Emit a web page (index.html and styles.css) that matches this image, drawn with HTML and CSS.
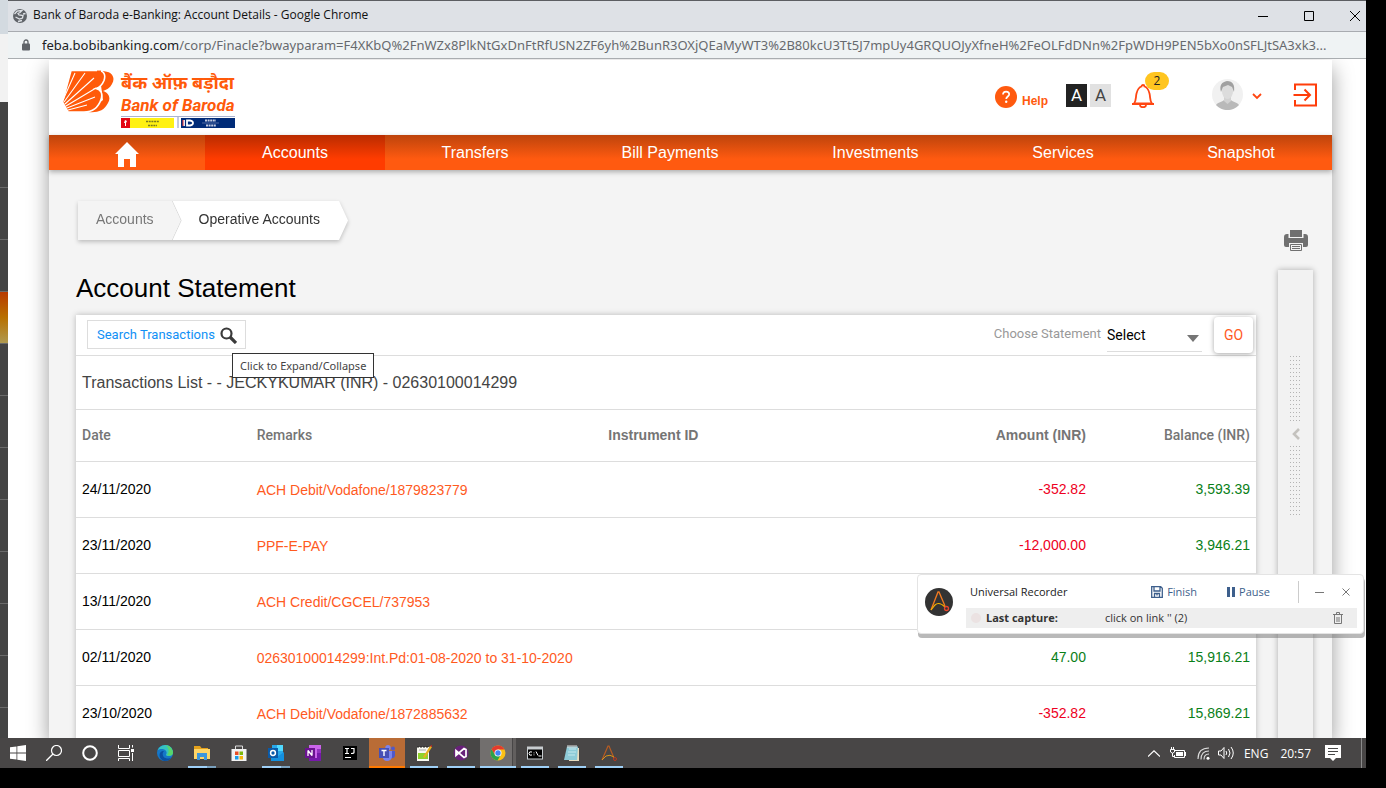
FILE: index.html
```html
<!DOCTYPE html>
<html lang="en">
<head>
<meta charset="utf-8">
<title>Bank of Baroda e-Banking: Account Details</title>
<link rel="stylesheet" href="styles.css">
</head>
<body>
<div class="desktop">
  <div class="workspace">
    <div class="behind" aria-hidden="true">
      <span class="b-light"></span><span class="b-white"></span><span class="b-first"></span><span class="b-item"></span><span class="b-item"></span><span class="b-item b-hot"></span><span class="b-item"></span><span class="b-item"></span><span class="b-item"></span><span class="b-item"></span><span class="b-item"></span><span class="b-item"></span><span class="b-item"></span><span class="b-item"></span>
    </div>
    <div class="window">
      <div class="titlebar">
        <svg class="globe" viewBox="0 0 14 14"><circle cx="7" cy="7" r="7" fill="#5f6368"/><path d="M1.500 5L4 2.200 9 1.500 7 3.500 5 4.500 6 6l4 .5-.5 2.500-3 1-4-2M10 5l2.500-.5M5 12.500l4-1" stroke="#dee1e6" stroke-width="1.300" fill="none"/></svg>
        <span class="wtitle">Bank of Baroda e-Banking: Account Details - Google Chrome</span>
        <div class="wbtns">
          <button aria-label="Minimize"><svg viewBox="0 0 12 12"><path d="M1 6.500h10" stroke="#000" fill="none"/></svg></button>
          <button aria-label="Maximize"><svg viewBox="0 0 12 12"><path d="M1.500 1.500h9v9h-9z" stroke="#000" fill="none"/></svg></button>
          <button aria-label="Close"><svg viewBox="0 0 12 12"><path d="M1 1l10 10M11 1L1 11" stroke="#000" fill="none"/></svg></button>
        </div>
      </div>
      <div class="urlbar">
        <svg class="lock" viewBox="0 0 8 12"><path d="M2 5V3a2 2 0 0 1 4 0v2" fill="none" stroke="#5f6368" stroke-width="1.300"/><rect y="4.500" width="8" height="7" rx="1" fill="#5f6368"/></svg>
        <div class="url"><b>feba.bobibanking.com</b>/corp/Finacle?bwayparam=F4XKbQ%2FnWZx8PlkNtGxDnFtRfUSN2ZF6yh%2BunR3OXjQEaMyWT3%2B80kcU3Tt5J7mpUy4GRQUOJyXfneH%2FeOLFdDNn%2FpWDH9PEN5bXo0nSFLJtSA3xk3...</div>
      </div>
      <div class="viewport">
        <div class="page">
          <header class="header">
            <div class="logo">
              <svg class="mark" viewBox="0 0 51 43"><path d="M36 1c13-1 17 6 13 13-2 4-6 6-9 7 6 2 8 7 5 12-4 8-11 10-20 9l15-12z" fill="#ff5a0a"/><path d="M8 .500h26c7 0 9 4 7 10-2 5-5 7-8 8 5 1 7 5 5 11-3 9-9 12.500-17 12.500H5L-.5 32z" fill="#ff5a0a" stroke="#fff" stroke-width="1.600"/><path d="M34 1.300h4" stroke="#ff5a0a" stroke-width="1.500"/><path d="M0 30L12 3M1 32L22 3M2 34L31 8M3 36l30-18M4 38l28-11M5 40l19-5" stroke="#fff" stroke-width="1.100" fill="none"/></svg>
              <div class="words">
                <div class="hindi" lang="hi">बैंक ऑफ़ बड़ौदा</div>
                <div class="latin">Bank of Baroda</div>
                <svg class="partners" viewBox="0 0 114 12"><path d="M0 0.500h114" stroke="#aab4d0"/><path d="M0 2h9v10H0z" fill="#e30613"/><path d="M9 2h44v10H9z" fill="#fff112"/><path d="M4 4l2 1-1 2v3H4V7H3z" fill="#fff"/><path d="M25 5.500h13M27 9.500h9" stroke="#777a20" stroke-width="1.500" stroke-dasharray="2 .7"/><path d="M57 1v11" stroke="#8a96bd"/><path d="M60 2h54v10H60z" fill="#002b78"/><path d="M63 4v6M66 4.500h3q3 .5 3 2.500t-3 2.500h-3z" stroke="#fff" stroke-width="1.800" fill="none"/><path d="M62 4v6" stroke="#e33"/><path d="M84 4.500h11M85 9.500h10" stroke="#c5cce0" stroke-width="1.800" stroke-dasharray="2 .6"/><path d="M81 7h17" stroke="#8795bf" stroke-width=".6"/></svg>
              </div>
            </div>
            <div class="tools">
              <a class="help" href="#"><svg viewBox="0 0 22 22"><circle cx="11" cy="11" r="11" fill="#ff5a0f"/><path d="M8 8.500C8 4.500 14.200 4.700 14.200 8.300 14.200 10.500 11.200 10.600 11.200 13" stroke="#fff" stroke-width="1.700" fill="none"/><circle cx="11.200" cy="15.800" r="1.200" fill="#fff"/></svg><span>Help</span></a>
              <div class="contrast"><button class="dark">A</button><button>A</button></div>
              <button class="bell" aria-label="Notifications"><svg viewBox="0 0 24 24"><path d="M3 19.500c2.500-3 1.500-6 2.500-10C6.500 5.500 8.500 3 10.500 2.500 10.500.5 13.500.5 13.500 2.500c2 .5 4 3 5 7 1 4 0 7 2.500 10z" fill="none" stroke="#ff4612" stroke-width="1.800"/><path d="M1 20h22" stroke="#ff4612" stroke-width="2"/><path d="M9 21c0 3 6 3 6 0" fill="none" stroke="#ff4612" stroke-width="1.800"/></svg><span class="badge">2</span></button>
              <button class="user" aria-label="Profile"><svg class="avatar" viewBox="0 0 31 31"><circle cx="15.500" cy="15.500" r="15.500" fill="#f1f1f1"/><path d="M4 26c2-3 6-3 8-5h7c2 2 6 2 8 5a15.500 15.500 0 0 1-23 0z" fill="#b9b9b9"/><path d="M12 17h7v5l-3.500 3L12 22z" fill="#d2d2d2"/><ellipse cx="15.500" cy="12.500" rx="5.500" ry="7.500" fill="#dcdcdc"/><path d="M9 13C7 6 10 3 15 2c6 0 8 4 7 11l-2-5-4-2-5 2z" fill="#a0a0a0"/></svg><svg class="chev" viewBox="0 0 10 7"><path d="M1 1l4 4 4-4" stroke="#ff4612" stroke-width="1.800" fill="none"/></svg></button>
              <button class="exit" aria-label="Log out"><svg viewBox="0 0 24 24"><path d="M1.500 7V1.500h21v21h-21V17M0 12h16M11 6.500l5.500 5.500-5.500 5.500" fill="none" stroke="#ff3d0a" stroke-width="2"/></svg></button>
            </div>
          </header>
          <nav class="nav">
            <a href="#" aria-label="Home"><svg viewBox="0 0 24 25"><path d="M12 0l12 12h-3v13h-6v-8H9v8H3V12H0z" fill="#fff"/></svg></a>
            <a href="#" class="active">Accounts</a><a href="#">Transfers</a><a href="#">Bill Payments</a><a href="#">Investments</a><a href="#">Services</a><a href="#">Snapshot</a>
          </nav>
          <div class="content">
            <main class="main">
              <div class="crumbs"><a class="c1" href="#">Accounts</a><a class="c2" href="#">Operative Accounts</a></div>
              <h1>Account Statement</h1>
              <section class="card">
                <div class="bar">
                  <div class="searchwrap">
                    <button class="search">Search Transactions<svg viewBox="0 0 17 17"><circle cx="6.500" cy="6.500" r="5" fill="none" stroke="#3a3a3a" stroke-width="2.200"/><path d="M10 10l6 6" stroke="#3a3a3a" stroke-width="3.200"/></svg></button>
                    <div class="tip" role="tooltip">Click to Expand/Collapse</div>
                  </div>
                  <div class="choose">
                    <label for="stmt">Choose Statement</label>
                    <div class="selwrap"><select id="stmt"><option>Select</option></select><svg viewBox="0 0 12 7"><path d="M0 0h12L6 7z" fill="#757575"/></svg></div>
                    <button class="go">GO</button>
                  </div>
                </div>
                <h2>Transactions List - - JECKYKUMAR (INR) - 02630100014299</h2>
                <table>
                  <colgroup><col class="w-date"><col class="w-rem"><col class="w-ins"><col class="w-amt"><col class="w-bal"></colgroup>
                  <thead><tr><th>Date</th><th>Remarks</th><th class="strong">Instrument ID</th><th class="num strong">Amount (INR)</th><th class="num">Balance (INR)</th></tr></thead>
                  <tbody>
                    <tr><td>24/11/2020</td><td class="remark"><a href="#">ACH Debit/Vodafone/1879823779</a></td><td></td><td class="num neg">-352.82</td><td class="num pos">3,593.39</td></tr>
                    <tr><td>23/11/2020</td><td class="remark"><a href="#">PPF-E-PAY</a></td><td></td><td class="num neg">-12,000.00</td><td class="num pos">3,946.21</td></tr>
                    <tr><td>13/11/2020</td><td class="remark"><a href="#">ACH Credit/CGCEL/737953</a></td><td></td><td></td><td></td></tr>
                    <tr><td>02/11/2020</td><td class="remark"><a href="#">02630100014299:Int.Pd:01-08-2020 to 31-10-2020</a></td><td></td><td class="num pos">47.00</td><td class="num pos">15,916.21</td></tr>
                    <tr><td>23/10/2020</td><td class="remark"><a href="#">ACH Debit/Vodafone/1872885632</a></td><td></td><td class="num neg">-352.82</td><td class="num pos">15,869.21</td></tr>
                  </tbody>
                </table>
              </section>
            </main>
            <aside class="side">
              <button class="print" aria-label="Print"><svg viewBox="0 0 24 22"><path d="M6 0h12v7H6z" fill="#707070"/><path d="M0 7q0-3 3-3h1.500v4h15V4H21q3 0 3 3v8q0 2-2 2h-3v-4H5v4H2q-2 0-2-2z" fill="#707070"/><path d="M6.500 14.500h11v6h-11zM8 16.500h8M8 18.500h8" fill="none" stroke="#707070"/></svg></button>
              <button class="drawer" aria-label="Open panel"><span class="dots"></span><svg viewBox="0 0 8 12"><path d="M7 1L2 6l5 5" fill="none" stroke="#c4c2be" stroke-width="2.600"/></svg><span class="dots tall"></span></button>
            </aside>
          </div>
        </div>
      </div>
    </div>
    <section class="recorder">
      <svg class="rlogo" viewBox="0 0 28 28"><circle cx="14" cy="14" r="14" fill="#333"/><path d="M6 22L13 4h1l6 14" stroke="#f47b20" stroke-width="1.300" fill="none"/><path d="M6 22l4-5c3-3 7-1 10 2" stroke="#f5b400" stroke-width="1.200" fill="none"/><circle cx="21.500" cy="20.500" r="2" stroke="#e8452c" stroke-width="1.300" fill="none"/></svg>
      <div class="rbody">
        <div class="rtop">
          <span class="rname">Universal Recorder</span>
          <button class="finish"><svg viewBox="0 0 12 12"><path d="M.7.700h9l1.600 1.600v9H.7zM3 1v4h6V1M3.500 11V7.500h5V11M6 7.500v2" fill="none" stroke="#3d5f8c" stroke-width="1.300"/></svg>Finish</button>
          <button class="pause"><svg viewBox="0 0 8 10"><path d="M0 0h3v10H0zM5 0h3v10H5z" fill="#3d5f8c"/></svg>Pause</button>
          <span class="sep"></span>
          <button aria-label="Minimize recorder"><svg viewBox="0 0 10 10"><path d="M0 5.500h9" stroke="#777"/></svg></button>
          <button aria-label="Close recorder"><svg viewBox="0 0 10 10"><path d="M1.500 1.500l7 7M8.500 1.500l-7 7" stroke="#777"/></svg></button>
        </div>
        <div class="rlast"><i></i><b>Last capture:</b><span>click on link '' (2)</span><button aria-label="Delete"><svg viewBox="0 0 10 12"><path d="M0 2.500h10M3.500 2V.5h3V2M1.500 3v8.500h7V3M4 5v5M6 5v5" fill="none" stroke="#777"/></svg></button></div>
      </div>
    </section>
  </div>
  <footer class="taskbar">
    <div class="sys">
      <button aria-label="Start"><svg viewBox="0 0 16 16"><path d="M0 2.300L6.500 1.400V7.600H0zM7.300 1.300L16 0v7.600H7.300zM0 8.400h6.500v6.200L0 13.700zM7.300 8.400H16V16l-8.700-1.300z" fill="#fff"/></svg></button>
      <button aria-label="Search"><svg viewBox="0 0 16 16"><circle cx="10.500" cy="5.500" r="5" fill="none" stroke="#fff" stroke-width="1.200"/><path d="M7 9l-7 7" stroke="#fff" stroke-width="1.300"/></svg></button>
      <button aria-label="Cortana"><svg viewBox="0 0 16 16"><circle cx="8" cy="8" r="6.800" fill="none" stroke="#fff" stroke-width="2"/></svg></button>
      <button aria-label="Task view"><svg viewBox="0 0 16 16"><path d="M.5 0v3.500h11V0M.5 5.500h11v6H.5zM.5 16v-2.500h11V16M14.500 0v2.500M14.500 8v8" fill="none" stroke="#fff"/><path d="M13 4h3v3h-3z" fill="#fff"/></svg></button>
    </div>
    <div class="apps">
      <button aria-label="Edge"><svg viewBox="0 0 16 16"><circle cx="8" cy="8" r="8" fill="#1577c8"/><path d="M.5 5.500C3-1.500 13-2 15.500 5c1.500 4-1 6.500-4 6-2.500 0-3-1-2-2.500C10.500 4.500 4 2.500.5 5.500z" fill="#36c3c0"/><path d="M11 .700c4 2 6 6 4.500 8.800-1 1.500-4 1.500-5.500.5 2.500-3 2-6.500-1-9.800z" fill="#58d56b"/><path d="M7 6c-2.500 2-1.500 7 3 7.500 2 0 3.500-.5 4.500-1.500-1.500 3-4 4-7 4-4-1-6-5-4.500-8 1-1.800 2.500-2 4-2z" fill="#0b4fa0"/></svg></button>
      <button class="run more" aria-label="File Explorer"><svg viewBox="0 0 16 16"><path d="M0 1h6l1.500 2H14v11H0z" fill="#e4a11b"/><path d="M0 4h16v10H0z" fill="#ffd566"/><path d="M3 8h10v7h-3v-3H6v3H3z" fill="#3d96db"/></svg></button>
      <button aria-label="Store"><svg viewBox="0 0 16 16"><path d="M4.500 5V1h7v4" fill="none" stroke="#ddd"/><path d="M.5 4h15v12H.5z" fill="#f2f2f2"/><path d="M4 6.500h3.500V10H4z" fill="#e94e24"/><path d="M8.500 6.500H12V10H8.500z" fill="#7db80a"/><path d="M4 11h3.500v3.500H4z" fill="#1c9ce8"/><path d="M8.500 11H12v3.500H8.500z" fill="#f7b50c"/></svg></button>
      <button class="run more" aria-label="Outlook"><svg viewBox="0 0 16 16"><path d="M4 0h11v14H4z" fill="#28a8ea"/><path d="M9 0h6v6H9z" fill="#50d9ff"/><path d="M3 9l6 3 7-5v9H3z" fill="#1490df"/><path d="M0 3h10v10H0z" fill="#0a5aa8"/><circle cx="5" cy="8" r="2.400" fill="none" stroke="#fff" stroke-width="1.500"/></svg></button>
      <button aria-label="OneNote"><svg viewBox="0 0 16 16"><path d="M4 0h12v16H4z" fill="#ca64ea"/><path d="M12 4h4v12h-4z" fill="#9332bf"/><path d="M12 8h4v8H4v-3h8z" fill="#7719aa"/><path d="M0 3h10v10H0z" fill="#6a138f"/><path d="M3 11V5.500L7 10.500V5" fill="none" stroke="#fff" stroke-width="1.300" stroke-linejoin="bevel"/></svg></button>
      <button aria-label="IntelliJ IDEA"><svg viewBox="0 0 16 16"><path d="M1 1h14v14H1z" fill="#000"/><path d="M3 3.500h4M5 3.500v5M3 8.500h4M9 3.500h3v4q0 1-3 1M3 12.500h6" stroke="#fff" stroke-width="1.200" fill="none"/></svg></button>
      <button class="alert" aria-label="Teams"><svg viewBox="0 0 16 16"><circle cx="9" cy="2.700" r="2.700" fill="#7b83eb"/><circle cx="14" cy="3.500" r="1.900" fill="#5059c9"/><path d="M11 6h5v5q-1 3-5 2z" fill="#5059c9"/><path d="M4 6h9v6q-1 4-5 4t-4-4z" fill="#7b83eb"/><path d="M0 3h10v10H0z" fill="#4650b6"/><path d="M2.500 5.500h5M5 5.500V11" stroke="#fff" stroke-width="1.400"/></svg></button>
      <button class="run" aria-label="Notepad++"><svg viewBox="0 0 16 16"><path d="M1 2h12v14H1z" fill="#f8f8f0"/><path d="M2 8h10v6H2z" fill="#8fd22a"/><path d="M3 5h7" stroke="#aaa"/><path d="M2 1v2M5 1v2M8 1v2M11 1v2" stroke="#222"/><path d="M7 12L14 1l2 1-7 11z" fill="#e8b020"/><path d="M14 1l2 1 0-2z" fill="#c22"/></svg></button>
      <button class="run" aria-label="Visual Studio"><svg viewBox="0 0 16 16"><circle cx="8" cy="8" r="7.500" fill="#68217a"/><path d="M3 5.500v5l8-7 2 1v7l-2 1z" fill="none" stroke="#fff" stroke-width="1.700"/></svg></button>
      <button class="run focus" aria-label="Chrome"><svg viewBox="0 0 16 16"><circle cx="8" cy="8" r="7.500" fill="#fbc116"/><path d="M1.500 4.200A7.500 7.500 0 0 1 14.500 4.500H8L5 10z" fill="#e33b2e"/><path d="M1.500 4.200A7.500 7.500 0 0 0 7.500 15.500L11 9.500 5 10z" fill="#2ba24c"/><circle cx="8" cy="8" r="3.500" fill="#fff"/><circle cx="8" cy="8" r="2.700" fill="#4285f4"/></svg></button>
      <button class="run" aria-label="Command Prompt"><svg viewBox="0 0 16 16"><path d="M0 1.500h16v13H0z" fill="#c8cdd0"/><path d="M1 4.500h14v9H1z" fill="#000"/><path d="M5 7q-3-1-3 1.500T5 10M7 7.500v.8M7 9.500v.8M9 6.500l2 4M11.500 11h3" stroke="#fff" fill="none"/></svg></button>
      <button class="run" aria-label="Notepad"><svg viewBox="0 0 16 16"><path d="M4 3h11v13H5z" fill="#e8dcc0"/><path d="M3 1.500h11L13 15H0z" fill="#8ecbd8"/><path d="M5 4h7M4 7h8M4 10h7" stroke="#c4e8ee"/><path d="M4 0v3M6 0v3M8 0v3M10 0v3M12 0v3" stroke="#ddd"/></svg></button>
      <button class="run" aria-label="Recorder"><svg viewBox="0 0 16 16"><path d="M1 15L7 1h1l5 12" stroke="#b85c22" fill="none" stroke-width="1.200"/><path d="M1 15l4-4q4-2 8 1" stroke="#d8941a" fill="none"/><circle cx="14" cy="14" r="1.500" fill="none" stroke="#b83a20"/></svg></button>
    </div>
    <div class="tray">
      <svg class="t-up" viewBox="0 0 12 7"><path d="M0 6.500L6 .8l6 5.700" fill="none" stroke="#fff" stroke-width="1.200"/></svg>
      <svg class="t-bat" viewBox="0 0 16 12"><path d="M5 3.500h9.500v7H4.500V8M15.500 5v4" fill="none" stroke="#fff"/><path d="M6 5h7v4H6z" fill="#fff"/><path d="M.5 2.500h4v2.500q-2 2.500-4 0zM1.500 0v2M3.500 0v2M2.500 6v3.500h2" fill="none" stroke="#fff"/></svg>
      <svg class="t-wifi" viewBox="0 0 13 13"><path d="M1 12Q1 1 12 1M4 12.500Q4 4 12 4M7 12.500Q7 7 12 7" fill="none" stroke="#ddd" stroke-width="1.100"/><circle cx="11" cy="11.300" r="1.500" fill="#fff"/></svg>
      <svg class="t-vol" viewBox="0 0 17 14"><path d="M.5 5h2.500l3-3.500v11L3 9H.5zM8 5q1.500 2 0 4M10.500 3q3 4 0 8M13 1q4.500 6 0 12" fill="none" stroke="#fff"/></svg>
      <span class="lang">ENG</span><span class="clock">20:57</span>
      <svg class="t-note" viewBox="0 0 16 16"><path d="M0 0h16v13h-5l-3 3-3-3H0z" fill="#fff"/><path d="M3 3.500h10M3 6.500h10M3 9.500h7" stroke="#484848"/></svg>
      <span class="peek"></span>
    </div>
  </footer>
</div>
</body>
</html>
```
FILE: styles.css
```css
* { box-sizing: border-box; }
body { margin: 0; background: #000; font-family: "Liberation Sans", Arial, sans-serif; font-size: 14px; }
button { border: 0; padding: 0; background: none; font: inherit; color: inherit; }
a { text-decoration: none; color: inherit; }
svg { display: block; flex: none; }
.desktop { display: flex; flex-direction: column; height: 100vh; padding: 0 20px 20px 0; overflow: hidden; }
.workspace { position: relative; flex: 1; min-height: 0; display: flex; }

.behind { width: 8px; display: flex; flex-direction: column; overflow: hidden; background: #444; }
.behind span { flex: none; }
.b-light { height: 34px; background: #d3dae0; }
.b-white { height: 68px; background: #f2f2f2; }
.b-first { height: 85px; }
.b-item { height: 52px; border-top: 1px solid #6a6a6a; }
.b-hot { background: linear-gradient(#b83a00, #b87000 50%, #b09a50); }

.window { flex: 1; min-width: 0; display: flex; flex-direction: column; background: #fff; border-top: 1px solid #5c5e62; overflow: hidden; font-family: "Open Sans", "Noto Sans", sans-serif; }
.titlebar { flex: none; display: flex; align-items: center; height: 31px; padding: 0 5px; background: #dee1e6; border-bottom: 1px solid #a8abb0; font-size: 12px; color: #111; }
.globe { width: 14px; height: 14px; margin-right: 6px; }
.wtitle { flex: 1; white-space: nowrap; line-height: 16px; padding-bottom: 2px; }
.wbtns { display: flex; gap: 34px; }
.wbtns svg { width: 12px; height: 12px; }
.urlbar { flex: none; display: flex; align-items: center; gap: 12px; height: 27px; padding: 0 4px 0 14px; background: #eff3f4; border-bottom: 1px solid #a9adb0; }
.lock { width: 8px; height: 12px; }
.url { flex: 1; min-width: 0; overflow: hidden; white-space: nowrap; font: 13px/20px "Noto Sans", "Open Sans", sans-serif; color: #676a6e; }
.url b { font-weight: normal; color: #202124; }

.viewport { flex: 1; min-height: 0; padding: 1px 34px 0 41px; overflow: hidden; display: flex; }
.page { flex: 1; min-width: 0; display: flex; flex-direction: column; background: #f4f4f4; box-shadow: 0 8px 20px rgba(0,0,0,.4); font-family: "Liberation Sans", Arial, sans-serif; }
.header { flex: none; display: flex; justify-content: space-between; align-items: flex-start; height: 75px; padding: 10px 14px 0; background: #fff; }
.logo { display: flex; gap: 7px; color: #ff5a0a; }
.mark { width: 51px; height: 43px; }
.hindi { height: 25px; font: italic bold 18px/25px "Noto Sans", sans-serif; white-space: nowrap; }
.latin { height: 21px; font: italic bold 17px/21px Roboto, sans-serif; }
.partners { width: 114px; height: 12px; }
.tools { display: flex; align-items: flex-start; }
.help { display: flex; gap: 5px; padding-top: 16px; font-weight: bold; font-size: 12px; line-height: 30px; color: #ff5a0f; }
.help svg { width: 22px; height: 22px; }
.contrast { display: flex; gap: 3px; margin: 14px 0 0 18px; font: 17px/23px Roboto, sans-serif; }
.contrast button { width: 21px; height: 23px; background: #e1e1e1; color: #444; }
.contrast .dark { background: #222; color: #fff; }
.bell { position: relative; margin: 14px 0 0 20px; }
.bell svg { width: 24px; height: 24px; }
.badge { position: absolute; left: 14px; top: -12px; width: 24px; height: 18px; border-radius: 9px; background: #ffc520; color: #222; font: 12px/18px "Open Sans", sans-serif; text-align: center; }
.user { display: flex; align-items: center; gap: 9px; margin: 9px 0 0 57px; }
.avatar { width: 31px; height: 31px; }
.chev { width: 10px; height: 7px; margin-top: 4px; }
.exit { margin: 13px 0 0 31px; }
.exit svg { width: 25px; height: 24px; }
.nav { flex: none; display: grid; grid-template-columns: 156fr 180fr 180fr 210fr 201fr 174fr 182fr; height: 35px; background: linear-gradient(#bd440c, #ff5a10 24px); box-shadow: 0 2px 5px rgba(0,0,0,.3); }
.nav a { display: flex; justify-content: center; align-items: center; color: #fff; font-size: 16px; }
.nav svg { width: 24px; height: 25px; margin-top: 4px; }
.nav .active { background: linear-gradient(#b92c00, #ff3c00 24px); }

.content { flex: 1; display: flex; gap: 22px; padding: 31px 19px 0 27px; }
.main { flex: 1; min-width: 0; }
.crumbs { display: flex; width: max-content; margin-left: 2px; height: 39px; line-height: 37px; filter: drop-shadow(0 2px 2px rgba(0,0,0,.22)); }
.crumbs a { padding: 0 28px 0 18px; }
.c1 { background: #f4f4f4; color: #777; }
.c2 { position: relative; margin-left: -10px; color: #333; background: #fff; clip-path: polygon(0 0, calc(100% - 9px) 0, 100% 50%, calc(100% - 9px) 100%, 0 100%, 9px 50%); }
.c2::before { content: ""; position: absolute; inset: 0 auto 0 0; width: 10px; background: #d8d8d8; clip-path: polygon(0 0, 1px 0, 10px 50%, 1px 100%, 0 100%, 9px 50%); }
.crumbs .c2 { padding-left: 27px; }
h1 { margin: 32px 0 0; font-size: 26px; line-height: 32px; font-weight: normal; }
.card { margin-top: 11px; background: #fff; box-shadow: 0 0 6px rgba(0,0,0,.25); }
.bar { display: flex; justify-content: space-between; height: 41px; padding: 0 3px 0 11px; border-bottom: 1px solid #ddd; font-family: Roboto, sans-serif; }
.searchwrap { position: relative; padding-top: 5px; }
.search { display: flex; align-items: center; gap: 5px; height: 29px; padding: 0 8px 0 9px; border: 1px solid #ddd; color: #1090f5; font-size: 13px; }
.search svg { width: 17px; height: 17px; margin-top: 2px; }
.tip { position: absolute; left: 145px; top: 38px; z-index: 2; width: max-content; height: 25px; padding: 0 7px; border: 1px solid #333; background: #fff; color: #444; font: 11px/23px "Noto Sans", "Open Sans", sans-serif; }
.choose { display: flex; color: #999; font-size: 13px; }
.choose label { line-height: 38px; margin-right: 6px; }
.selwrap { position: relative; width: 95px; height: 37px; margin-right: 12px; border-bottom: 1px solid #ddd; }
.selwrap select { width: 100%; height: 100%; padding: 4px 0 0; border: 0; background: none; appearance: none; font: 14px Roboto, sans-serif; color: #000; }
.selwrap svg { position: absolute; right: 3px; top: 20px; width: 12px; height: 7px; }
.go { position: relative; width: 39px; height: 36px; margin-top: 2px; border-radius: 4px; background: #fff; box-shadow: 0 1px 5px rgba(0,0,0,.35); color: #ff5a1e; font-size: 14px; }
h2 { margin: 0; padding: 0 6px; height: 54px; line-height: 53px; border-bottom: 1px solid #ddd; font-weight: normal; font-size: 16px; color: #444; }
table { width: 100%; table-layout: fixed; border-collapse: separate; border-spacing: 0; }
.w-date { width: 14.8%; } .w-rem { width: 29.8%; } .w-ins { width: 20.3%; } .w-amt { width: 21.2%; } .w-bal { width: 13.9%; }
th, td { padding: 0 6px 2px; border-bottom: 1px solid #ddd; text-align: left; white-space: nowrap; }
th { height: 52px; font: 500 14px Roboto, sans-serif; color: #757575; }
th.strong { font: bold 14px "Liberation Sans", Arial, sans-serif; }
td { height: 56px; color: #000; }
td.remark { padding-bottom: 0; }
td a { color: #ff5a1e; }
th.num, td.num { text-align: right; }
td.neg { color: #ee0022; } td.pos { color: #0a8018; }
.side { width: 35px; display: flex; flex-direction: column; padding-top: 29px; }
.print { align-self: center; }
.print svg { width: 24px; height: 22px; }
.drawer { flex: 1; display: flex; flex-direction: column; align-items: center; gap: 6px; margin-top: 18px; padding-top: 86px; background: #f2f2f2; box-shadow: 0 0 6px rgba(0,0,0,.3); }
.dots { width: 11px; height: 66px; background: repeating-linear-gradient(transparent 0 1px, #f2f2f2 1px 4px), repeating-linear-gradient(90deg, #b4b4b4 0 1px, transparent 1px 3px); }
.dots.tall { height: 70px; }
.drawer svg { width: 8px; height: 12px; }

.recorder { position: absolute; right: 2px; bottom: 104px; z-index: 3; width: 447px; height: 60px; display: flex; gap: 13px; align-items: center; padding: 0 6px 5px 7px; border: 1px solid #e4e4e4; border-radius: 4px; background: #fff; box-shadow: 1px 4px 0 rgba(100,100,100,.45); font: 11px "Open Sans", sans-serif; }
.rlogo { width: 28px; height: 28px; }
.rbody { flex: 1; }
.rtop { display: flex; align-items: center; height: 32px; padding-left: 4px; }
.rname { flex: 1; color: #222; }
.rtop button { display: flex; align-items: center; gap: 4px; color: #3d5f8c; }
.rtop svg { width: 10px; height: 10px; }
.rtop .finish svg { width: 12px; height: 12px; }
.rtop .pause { margin-left: 30px; }
.rtop .pause svg { width: 8px; }
.sep { width: 1px; height: 22px; margin: 0 16px 0 28px; background: #ccc; }
.sep + button { margin-right: 16px; }
.rtop button:last-child { margin-right: 6px; }
.rlast { display: flex; align-items: center; height: 20px; padding: 0 14px 0 5px; background: #eee; color: #333; }
.rlast i { width: 10px; height: 10px; margin-right: 5px; border-radius: 50%; background: #ebe2e2; }
.rlast b { width: 119px; }
.rlast span { flex: 1; }
.rlast svg { width: 10px; height: 12px; }

.taskbar { flex: none; display: flex; height: 30px; background: #484646; color: #fff; font: 12px "Open Sans", sans-serif; }
.sys, .apps { display: flex; }
.sys { margin-right: 3px; }
.taskbar button { position: relative; width: 37px; padding-right: 1px; display: flex; align-items: center; justify-content: center; }
.taskbar .sys button { width: 36px; padding: 0; }
.taskbar button svg { width: 16px; height: 16px; }
.run::after { content: ""; position: absolute; left: 4px; right: 5px; bottom: 0; height: 2px; background: #9fd0f7; }
.more::after { background: linear-gradient(90deg, #9fd0f7 19px, #7aa0bd 19px); }
.taskbar .alert { background: linear-gradient(#b96c36 28px, #ff7a00 28px) 0 0 / 36px 100% no-repeat; }
.focus { background: linear-gradient(90deg, #726f6e 32px, #484646 32px 33px, #625f5e 33px 36px, transparent 36px); }
.focus::after { left: 0; right: 1px; }
.tray { flex: 1; display: flex; align-items: center; justify-content: flex-end; }
.t-up { width: 12px; height: 7px; margin-right: 10px; }
.t-bat { width: 16px; height: 12px; margin-right: 11px; }
.t-wifi { width: 13px; height: 13px; margin-right: 8px; }
.t-vol { width: 17px; height: 14px; margin-right: 9px; }
.lang { margin-right: 12px; }
.clock { margin-right: 14px; }
.t-note { width: 16px; height: 16px; margin-right: 20px; }
.peek { width: 5px; height: 100%; border-left: 1px solid #8a8a8a; }
```
